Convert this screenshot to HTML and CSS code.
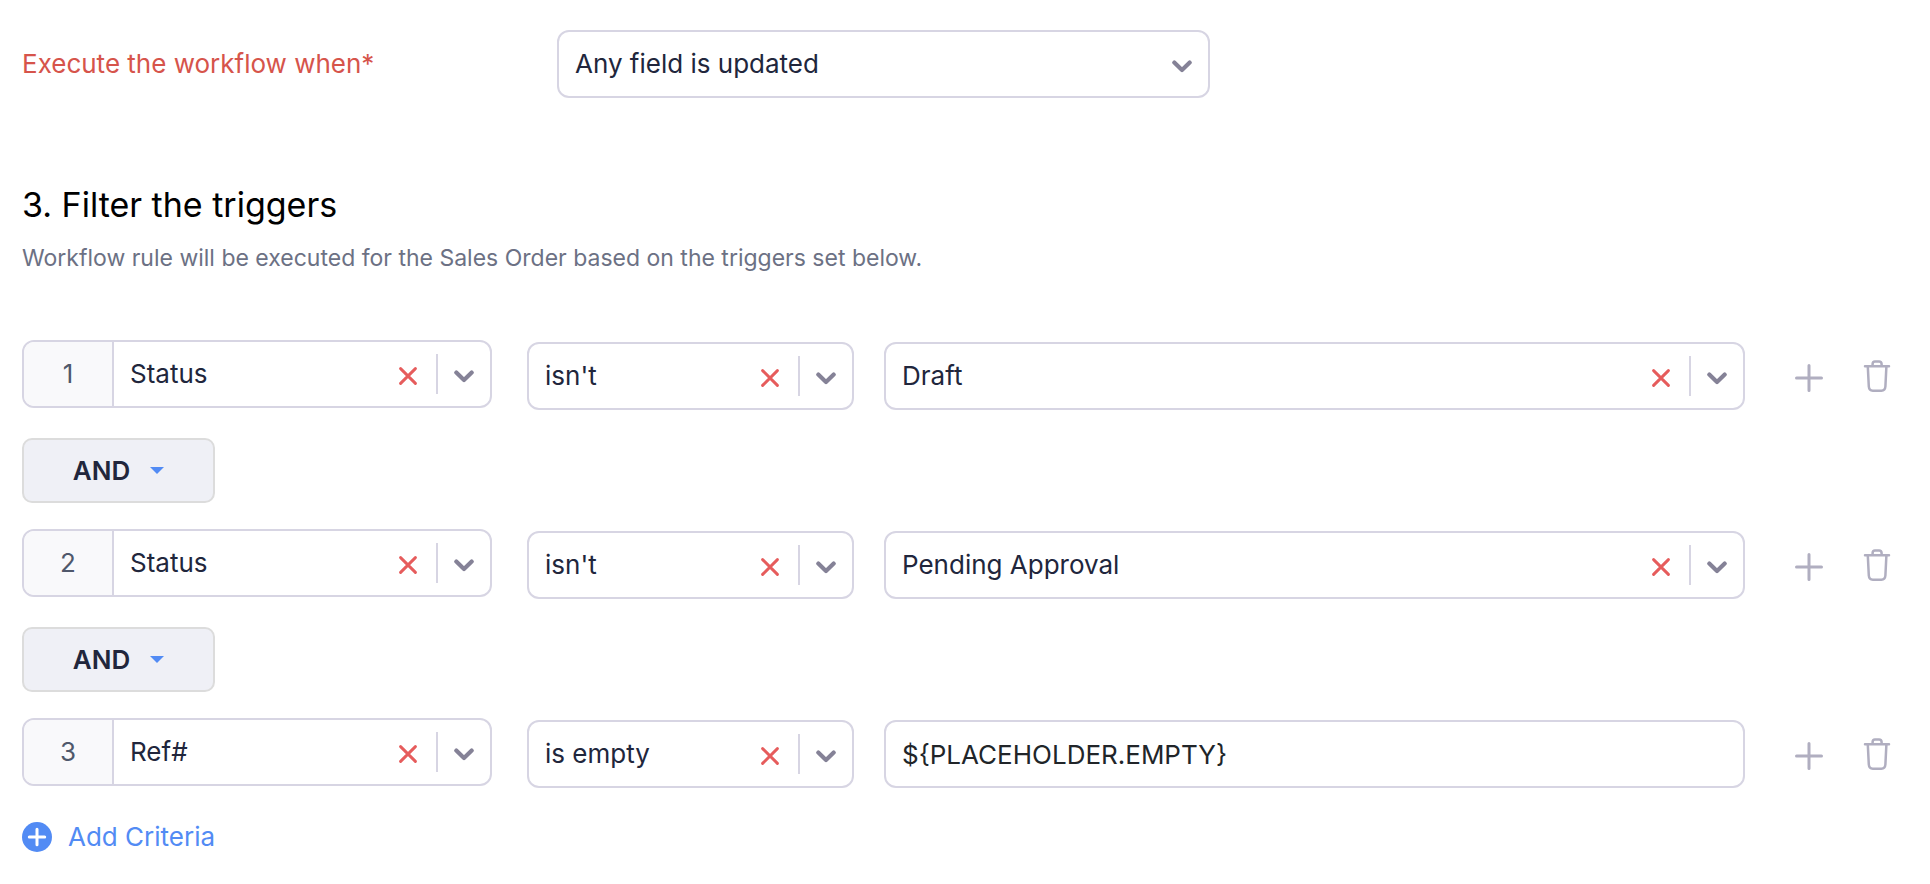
FILE: index.html
```html
<!DOCTYPE html>
<html lang="en">
<head>
  <meta charset="UTF-8" />
  <meta name="viewport" content="width=device-width, initial-scale=1.0" />
  <title>Workflow Rule</title>
  <link rel="stylesheet" href="styles.css">
</head>
<body>
  <!-- shared icons -->
  <svg class="sprite" aria-hidden="true">
    <symbol id="chevron" viewBox="0 0 20 13"><path d="M2.3 2.6L10 10L17.7 2.6" fill="none" stroke="currentColor" stroke-width="4.2" stroke-linecap="round" stroke-linejoin="round"/></symbol>
    <symbol id="cross" viewBox="0 0 18 18"><path d="M1.6 1.6L16.4 16.4M16.4 1.6L1.6 16.4" fill="none" stroke="currentColor" stroke-width="2.9" stroke-linecap="round"/></symbol>
    <symbol id="plus" viewBox="0 0 28 28"><path d="M14 1.5V26.5M1.5 14H26.5" fill="none" stroke="currentColor" stroke-width="3" stroke-linecap="round"/></symbol>
    <symbol id="trash" viewBox="0 0 28 34"><path d="M2 7.2H26M9.6 7V5Q9.6 2.4 12 2.4H16Q18.6 2.4 18.6 5V7M4.8 7.4L5.8 27.5Q6.1 31.7 9.8 31.7H18.4Q22.1 31.7 22.4 27.5L23.4 7.4" fill="none" stroke="currentColor" stroke-width="2.5" stroke-linecap="round" stroke-linejoin="round"/></symbol>
  </svg>

  <form class="workflow">
    <div class="form-row">
      <label class="required" for="executeWhen">Execute the workflow when*</label>
      <div class="select-box">
        <select id="executeWhen"><option>Any field is updated</option></select>
        <svg class="chevron"><use href="#chevron"/></svg>
      </div>
    </div>

    <h2>3. Filter the triggers</h2>
    <p class="hint">Workflow rule will be executed for the Sales Order based on the triggers set below.</p>

    <div class="criteria">
      <div class="criteria-row">
        <div class="select-box field">
          <span class="number">1</span>
          <select aria-label="Field 1"><option>Status</option></select>
          <button type="button" class="clear" aria-label="Clear"><svg><use href="#cross"/></svg></button>
          <svg class="chevron"><use href="#chevron"/></svg>
        </div>
        <div class="select-box">
          <select aria-label="Comparator 1"><option>isn't</option></select>
          <button type="button" class="clear" aria-label="Clear"><svg><use href="#cross"/></svg></button>
          <svg class="chevron"><use href="#chevron"/></svg>
        </div>
        <div class="select-box">
          <select aria-label="Value 1"><option>Draft</option></select>
          <button type="button" class="clear" aria-label="Clear"><svg><use href="#cross"/></svg></button>
          <svg class="chevron"><use href="#chevron"/></svg>
        </div>
        <div class="actions">
          <button type="button" aria-label="Add row"><svg class="plus"><use href="#plus"/></svg></button>
          <button type="button" aria-label="Delete row"><svg class="trash"><use href="#trash"/></svg></button>
        </div>
      </div>

      <button type="button" class="operator">AND <span class="caret"></span></button>

      <div class="criteria-row">
        <div class="select-box field">
          <span class="number">2</span>
          <select aria-label="Field 2"><option>Status</option></select>
          <button type="button" class="clear" aria-label="Clear"><svg><use href="#cross"/></svg></button>
          <svg class="chevron"><use href="#chevron"/></svg>
        </div>
        <div class="select-box">
          <select aria-label="Comparator 2"><option>isn't</option></select>
          <button type="button" class="clear" aria-label="Clear"><svg><use href="#cross"/></svg></button>
          <svg class="chevron"><use href="#chevron"/></svg>
        </div>
        <div class="select-box">
          <select aria-label="Value 2"><option>Pending Approval</option></select>
          <button type="button" class="clear" aria-label="Clear"><svg><use href="#cross"/></svg></button>
          <svg class="chevron"><use href="#chevron"/></svg>
        </div>
        <div class="actions">
          <button type="button" aria-label="Add row"><svg class="plus"><use href="#plus"/></svg></button>
          <button type="button" aria-label="Delete row"><svg class="trash"><use href="#trash"/></svg></button>
        </div>
      </div>

      <button type="button" class="operator">AND <span class="caret"></span></button>

      <div class="criteria-row">
        <div class="select-box field">
          <span class="number">3</span>
          <select aria-label="Field 3"><option>Ref#</option></select>
          <button type="button" class="clear" aria-label="Clear"><svg><use href="#cross"/></svg></button>
          <svg class="chevron"><use href="#chevron"/></svg>
        </div>
        <div class="select-box">
          <select aria-label="Comparator 3"><option>is empty</option></select>
          <button type="button" class="clear" aria-label="Clear"><svg><use href="#cross"/></svg></button>
          <svg class="chevron"><use href="#chevron"/></svg>
        </div>
        <input class="text-box" type="text" aria-label="Value 3" value="${PLACEHOLDER.EMPTY}" />
        <div class="actions">
          <button type="button" aria-label="Add row"><svg class="plus"><use href="#plus"/></svg></button>
          <button type="button" aria-label="Delete row"><svg class="trash"><use href="#trash"/></svg></button>
        </div>
      </div>
    </div>

    <button type="button" class="add-criteria">
      <svg viewBox="0 0 30 30"><circle cx="15" cy="15" r="15" fill="#528bf4"/><path d="M15 7.3V22.7M7.3 15H22.7" stroke="#fff" stroke-width="3" stroke-linecap="round"/></svg>
      Add Criteria
    </button>
  </form>
</body>
</html>
```
FILE: styles.css
```css
* {
  box-sizing: border-box;
}
body {
  margin: 0;
  background: #fff;
  color: #21263c;
  font-family: Inter, sans-serif;
  font-size: 26px;
  line-height: 32px;
}
.sprite {
  display: none;
}
button, select, input {
  font: inherit;
  color: inherit;
  margin: 0;
}
button {
  padding: 0;
  border: none;
  background: none;
  cursor: pointer;
}
svg {
  display: block;
}
.workflow {
  padding: 30px 39px 30px 22px;
}
.form-row {
  display: grid;
  grid-template-columns: 535fr 653fr 681fr;
  align-items: center;
}
.required {
  color: #d6544b;
}
h2 {
  margin: 84px 0 0;
  color: #000;
  font-size: 34px;
  font-weight: 400;
  line-height: 46px;
}
.hint {
  margin: 14px 0 0;
  color: #6c7184;
  font-size: 23px;
  line-height: 32px;
}

/* Inputs */
.select-box {
  display: flex;
  align-items: center;
  height: 68px;
  min-width: 0;
  padding-right: 16px;
  border: 2px solid #d7d5e3;
  border-radius: 12px;
  background: #fff;
  overflow: hidden;
}
.select-box select {
  flex: 1;
  min-width: 0;
  height: 64px;
  padding: 0 16px;
  border: none;
  background: none;
  appearance: none;
}
.chevron {
  width: 20px;
  height: 13px;
  margin-top: 4px;
  color: #858297;
}
.clear {
  height: 40px;
  padding-right: 19px;
  margin-right: 16px;
  border-right: 2px solid #d7d5e3;
  color: #e65c5c;
}
.clear svg {
  width: 18px;
  height: 18px;
  margin-top: 4px;
}
.text-box {
  height: 68px;
  min-width: 0;
  padding: 0 16px;
  border: 2px solid #d7d5e3;
  border-radius: 12px;
  color: #212529;
}

/* Criteria */
.criteria {
  margin-top: 66px;
}
.criteria-row {
  display: grid;
  grid-template-columns: 475fr 327fr 861fr auto;
  column-gap: 30px;
  align-items: end;
  height: 70px;
}
.field {
  align-self: start;
  margin-right: 5px;
}
.number {
  display: flex;
  align-items: center;
  justify-content: center;
  width: 90px;
  height: 64px;
  border-right: 2px solid #d7d5e3;
  background: #f9f9fb;
  color: #4f586b;
}
.actions {
  display: flex;
  align-items: center;
  gap: 40px;
  height: 68px;
  margin-left: 20px;
  color: #b0aec0;
}
.plus {
  width: 28px;
  height: 28px;
  margin-top: 4px;
}
.trash {
  width: 28px;
  height: 34px;
}
.operator {
  display: flex;
  align-items: center;
  justify-content: center;
  gap: 20px;
  width: 193px;
  height: 65px;
  margin: 28px 0 26px;
  border: 2px solid #dcdcdc;
  border-radius: 10px;
  background: #eff0f6;
  font-weight: 600;
}
.caret {
  border: 7px solid transparent;
  border-top-color: #528bf4;
  border-bottom: none;
}
.add-criteria {
  display: flex;
  align-items: center;
  gap: 16px;
  margin-top: 33px;
  color: #528bf4;
}
.add-criteria svg {
  width: 30px;
  height: 30px;
}
```
